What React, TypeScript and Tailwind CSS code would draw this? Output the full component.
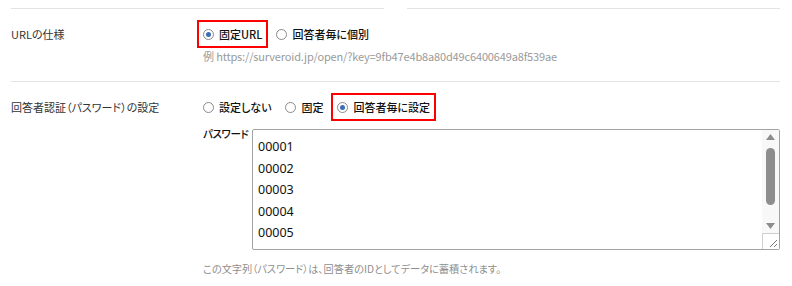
import React from 'react';

const font = "font-['Noto_Sans_CJK_JP','Noto_Sans',sans-serif] [font-feature-settings:'palt']";

const Radio = ({ checked }: { checked?: boolean }) => (
    <span className="w-[11px] h-[11px] rounded-full border border-[#8a8a8a] bg-white flex items-center justify-center shrink-0">
        {checked && <span className="w-[5px] h-[5px] rounded-full bg-[#3e6db3]" />}
    </span>
);

const Option = ({ label, checked, marked }: { label: string; checked?: boolean; marked?: boolean }) => (
    <div className={`h-[28px] flex items-center gap-[5px] px-[4px] border-2 ${marked ? 'border-[#ff0000]' : 'border-transparent'}`}>
        <Radio checked={checked} />
        <span className="text-[11px] text-[#111] font-medium">{label}</span>
    </div>
);

export default function App() {
    const passwords = ['00001', '00002', '00003', '00004', '00005'];
    return (
        <div className={`w-[792px] h-[286px] bg-white px-[11px] pt-2 text-[#333] ${font}`}>
            <div className="flex gap-[23px] w-[769px]">
                <div className="h-px flex-1 bg-[#e3e3e3]" />
                <div className="h-px flex-1 bg-[#e3e3e3]" />
            </div>

            {/* URL spec */}
            <div className="flex pb-[17px] border-b border-[#e3e3e3] w-[769px]">
                <div className="w-[186px] h-[28px] mt-[11px] flex items-center text-[11px]">URLの仕様</div>
                <div className="flex flex-col mt-[11px]">
                    <div className="flex gap-[2px]">
                        <Option label="固定URL" checked marked />
                        <Option label="回答者毎に個別" />
                    </div>
                    <div className="pl-[6px] h-4 leading-4 text-[11px] tracking-[-0.15px] text-[#9a9a9a] [font-feature-settings:normal]">
                        例 https://surveroid.jp/open/?key=9fb47e4b8a80d49c6400649a8f539ae
                    </div>
                </div>
            </div>

            {/* password */}
            <div className="flex w-[769px]">
                <div className="w-[186px] h-[28px] mt-[11px] flex items-center text-[11px]">回答者認証（パスワード）の設定</div>
                <div className="flex flex-col mt-[11px] flex-1">
                    <div className="flex gap-[2px]">
                        <Option label="設定しない" />
                        <Option label="固定" />
                        <Option label="回答者毎に設定" checked marked />
                    </div>
                    <div className="flex pl-[6px] mt-[8px]">
                        <div className="w-[49px] whitespace-nowrap text-[10.5px] tracking-[-0.4px] leading-[14px] text-[#111] font-medium -mt-[2px]">パスワード</div>
                        <div className="flex-1 h-[121px] border border-[#a3a3a3] rounded-[2px] flex">
                            <div className="flex-1 pt-[6px] pl-[5px]">
                                {passwords.map((p) => (
                                    <div key={p} className="h-[21.5px] leading-[21.5px] text-[12.5px] text-[#111] [font-feature-settings:normal] font-['Noto_Sans',sans-serif]">{p}</div>
                                ))}
                            </div>
                            <div className="w-[17px] flex flex-col bg-[#f8f8f8]">
                                <div className="h-[16px] flex items-center justify-center">
                                    <svg width="9" height="6" viewBox="0 0 9 6"><path d="M4.5 0 L9 6 L0 6 Z" fill="#8d8d8d" /></svg>
                                </div>
                                <div className="flex-1 flex justify-center pt-[3px] pb-[14px]">
                                    <div className="w-[9px] h-[57px] rounded-full bg-[#8d8d8d]" />
                                </div>
                                <div className="h-[16px] flex items-center justify-center">
                                    <svg width="9" height="6" viewBox="0 0 9 6"><path d="M0 0 L9 0 L4.5 6 Z" fill="#8d8d8d" /></svg>
                                </div>
                                <div className="h-[17px] border-t border-l border-[#cfcfcf] bg-white flex items-end justify-end p-[2px]">
                                    <svg width="8" height="8" viewBox="0 0 8 8"><path d="M8 1 L1 8 M8 5 L5 8" stroke="#7a7a7a" strokeWidth="1" /></svg>
                                </div>
                            </div>
                        </div>
                    </div>
                    <div className="pl-[6px] mt-[11px] h-4 leading-4 text-[10.2px] text-[#8f8f8f]">
                        この文字列（パスワード）は、回答者のIDとしてデータに蓄積されます。
                    </div>
                </div>
            </div>
        </div>
    );
}
